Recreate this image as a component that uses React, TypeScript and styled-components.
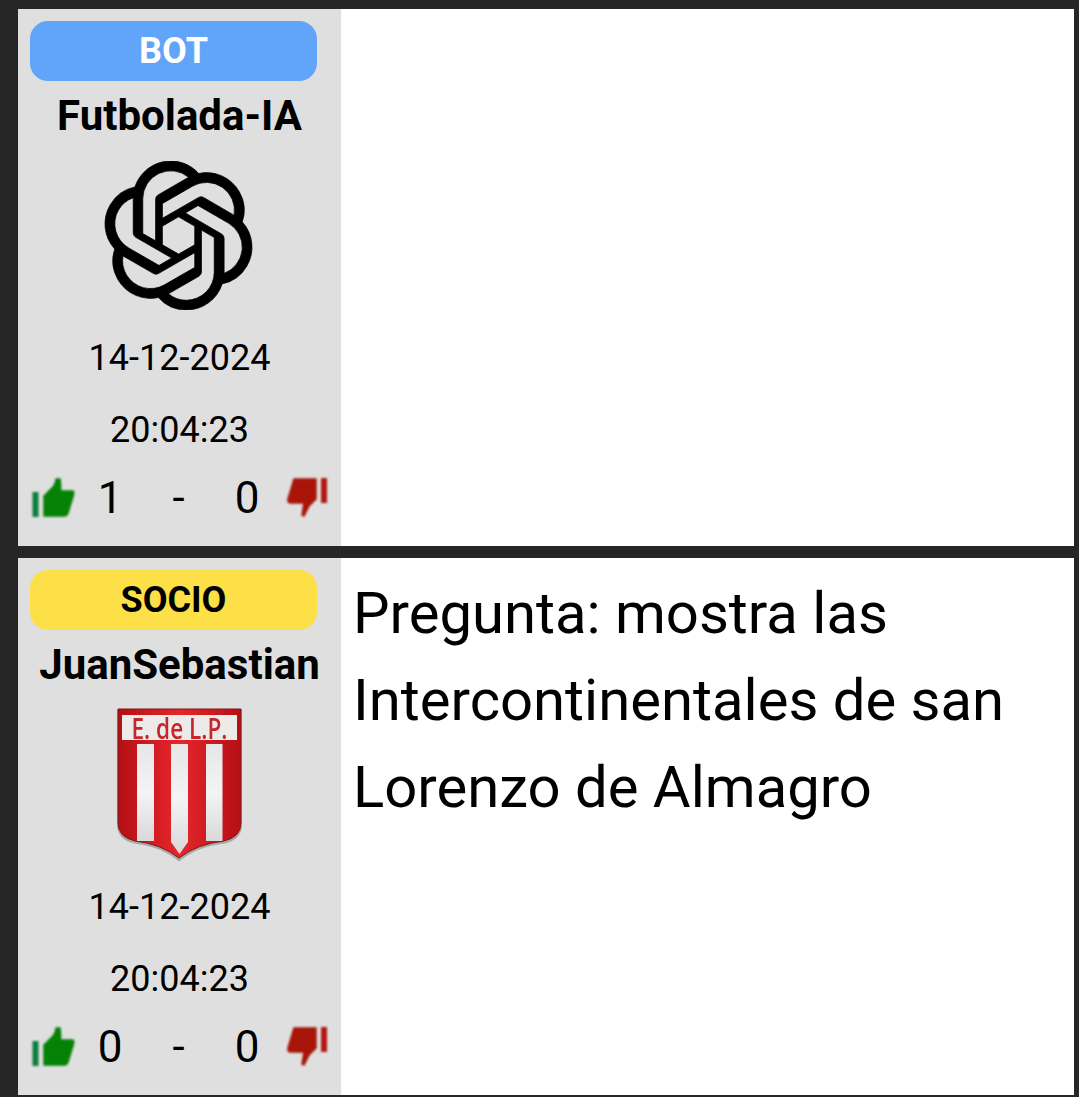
import React from "react";
import styled, { createGlobalStyle } from "styled-components";
import { SiOpenai } from "react-icons/si";

const Global = createGlobalStyle`
  html, body { margin: 0; padding: 0; background: #262626; }
  body { font-family: Roboto, "Liberation Sans", sans-serif; }
`;

const Page = styled.div`
  display: flex;
  flex-direction: column;
  gap: 12px;
  padding: 9px 5px 2px 18px;
  height: 1097px;
  box-sizing: border-box;
  overflow: hidden;
`;

const Post = styled.article`
  display: flex;
  height: 537px;
  flex: none;
`;

const Sidebar = styled.aside`
  width: 323px;
  flex: none;
  box-sizing: border-box;
  padding: 12px 12px 0;
  background: #dfdfdf;
  display: flex;
  flex-direction: column;
  align-items: center;
  color: #000;
`;

const Badge = styled.div<{ $bg: string; $fg: string }>`
  align-self: flex-start;
  width: 287px;
  height: 60px;
  flex: none;
  box-sizing: border-box;
  padding-bottom: 1px;
  border-radius: 18px;
  background: ${(p) => p.$bg};
  color: ${(p) => p.$fg};
  font-size: 36px;
  font-weight: 700;
  display: flex;
  align-items: center;
  justify-content: center;
`;

const Name = styled.div`
  margin-top: 12px;
  height: 46px;
  line-height: 46px;
  font-size: 42px;
  font-weight: 700;
  white-space: nowrap;
`;

const LogoSlot = styled.div`
  margin-top: 18px;
  height: 156px;
  flex: none;
  display: flex;
  align-items: center;
  justify-content: center;
`;

const BotLogo = styled(SiOpenai)`
  margin-right: 2px;
  margin-top: 1px;
  stroke: #000;
  stroke-width: 0.12;
`;

const Stamp = styled.div<{ $top: number }>`
  margin-top: ${(p) => p.$top}px;
  height: 50px;
  line-height: 50px;
  font-size: 36px;
  white-space: nowrap;
`;

const Votes = styled.div`
  margin-top: 15px;
  width: 100%;
  height: 55px;
  display: grid;
  grid-template-columns: 46px 68px 69px 68px 1fr;
  align-items: center;
  justify-items: center;
  font-size: 44px;
`;

const Thumb = styled.svg`
  width: 45px;
  height: 44px;
  filter: blur(0.8px);
`;

const Content = styled.div`
  flex: 1;
  background: #fff;
  color: #000;
  padding: 12px 12px;
  font-size: 58px;
  line-height: 87px;
`;

const SoftShield = styled.svg`
  filter: blur(0.6px);
`;

const ThumbUp = () => (
  <Thumb viewBox="31 476 45 44">
    <rect x="32.5" y="492" width="6" height="25" fill="#0a7f3a" />
    <path d="M44 516 L44 496 L52 488 Q56 484 56 479 L60 479 Q61 485 60.5 491 L72 491 Q74.5 491 73.5 495 L68 513 Q67 516 64 516 Z" fill="#058205" stroke="#058205" strokeWidth="1.5" strokeLinejoin="round" />
  </Thumb>
);

const ThumbDown = () => (
  <Thumb viewBox="283 476 45 44">
    <rect x="321" y="478" width="6" height="25" fill="#b01810" />
    <path d="M294 479 L316 479 L316 499 L309 506 L304 516 L302 515 L304 503 L290 503 Q287.5 503 288 499 Z" fill="#a81408" stroke="#a81408" strokeWidth="1.5" strokeLinejoin="round" />
  </Thumb>
);

const Shield = () => (
  <SoftShield width="158" height="156" viewBox="12 11 158 156">
    <defs>
      <linearGradient id="red" x1="0" x2="1" y1="0" y2="0">
        <stop offset="0" stopColor="#b30f14" />
        <stop offset="0.5" stopColor="#e6262c" />
        <stop offset="1" stopColor="#b50f14" />
      </linearGradient>
      <linearGradient id="stripe" x1="0" x2="0" y1="0" y2="1">
        <stop offset="0" stopColor="#e6e6e6" />
        <stop offset="0.5" stopColor="#f4f4f4" />
        <stop offset="1" stopColor="#d8d8d8" />
      </linearGradient>
    </defs>
    <path d="M28 13 H153 V128 Q153 143 136 147 Q108 150 90 165 Q72 150 45 147 Q28 143 28 128 Z" fill="#444" opacity="0.35" transform="translate(0 1.5)" />
    <path d="M29 14 H152 V128 Q152 142 135 146 Q108 149 90 163 Q72 149 46 146 Q29 142 29 128 Z" fill="url(#red)" stroke="#7d1a18" strokeWidth="1" />
    <rect x="33" y="20" width="115" height="25" fill="#ecebea" />
    <text x="90.5" y="43.5" textAnchor="middle" fontFamily="'Open Sans', sans-serif" fontSize="29" fontWeight="600" fill="#c5262a" textLength="96" lengthAdjust="spacingAndGlyphs">E. de L.P.</text>
    <rect x="48" y="49" width="17" height="97" fill="url(#stripe)" />
    <path d="M82 49 H99 V147 L90.5 159 L82 147 Z" fill="url(#stripe)" />
    <rect x="117" y="49" width="16.5" height="97" fill="url(#stripe)" />
  </SoftShield>
);

type Data = {
  badge: string; bg: string; fg: string; name: string;
  logo: React.ReactNode; up: number; text?: string;
};

const posts: Data[] = [
  { badge: "BOT", bg: "#60a5fa", fg: "#fff", name: "Futbolada-IA", logo: <BotLogo size={149} color="#000" />, up: 1 },
  { badge: "SOCIO", bg: "#fde047", fg: "#000", name: "JuanSebastian", logo: <Shield />, up: 0, text: "Pregunta: mostra las Intercontinentales de san Lorenzo de Almagro" },
];

export default function App() {
  return (
    <Page>
      <Global />
      {posts.map((p) => (
        <Post key={p.name}>
          <Sidebar>
            <Badge $bg={p.bg} $fg={p.fg}>{p.badge}</Badge>
            <Name>{p.name}</Name>
            <LogoSlot>{p.logo}</LogoSlot>
            <Stamp $top={20}>14-12-2024</Stamp>
            <Stamp $top={22}>20:04:23</Stamp>
            <Votes>
              <ThumbUp />
              <span>{p.up}</span>
              <span>-</span>
              <span>0</span>
              <ThumbDown />
            </Votes>
          </Sidebar>
          <Content>{p.text}</Content>
        </Post>
      ))}
    </Page>
  );
}
